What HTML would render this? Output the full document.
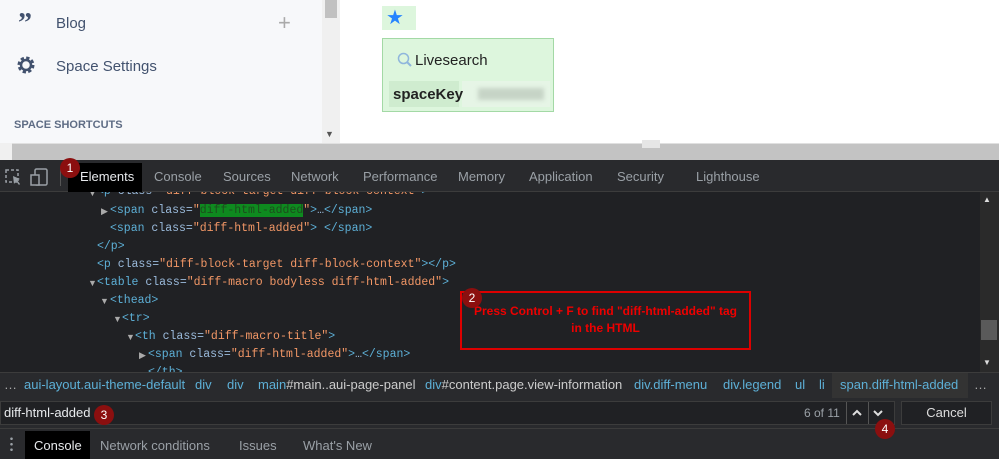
<!DOCTYPE html>
<html><head><style>
*{margin:0;padding:0;box-sizing:border-box}
body{width:999px;height:459px;overflow:hidden;position:relative;background:#fff;font-family:"Liberation Sans",sans-serif}
.abs{position:absolute}
.cl{position:absolute;font-family:"Liberation Mono",monospace;font-size:11.5px;white-space:pre;color:#9bbbdc;line-height:18px;height:18px}
.t{color:#5db0d7}.v{color:#f29766}
.tr{position:absolute;font-size:9px;color:#aaa;line-height:18px}
.tab{position:absolute;top:160px;height:32px;line-height:34px;font-size:13px;color:#9aa0a6}
.bc{position:absolute;top:372px;height:26px;line-height:26px;font-size:13px;color:#5db0d7}
.badge{position:absolute;width:20px;height:20px;border-radius:50%;background:#8b0f0f;color:#fff;font-size:12px;text-align:center;line-height:20px}
</style></head><body>
<div class="abs" style="left:0;top:0;width:322px;height:143px;background:#f7f8fa"></div>
<div class="abs" style="left:322px;top:0;width:18px;height:143px;background:#f0f0f0"></div>
<div class="abs" style="left:325px;top:0;width:12px;height:18px;background:#c1c1c1"></div>
<div class="abs" style="left:325px;top:129px;color:#555;font-size:9px">▼</div>
<div class="abs" style="left:18px;top:8px;font-size:28px;font-weight:bold;color:#42526e;font-family:'Liberation Serif',serif">”</div>
<div class="abs" style="left:56px;top:15px;font-size:15px;color:#42526e">Blog</div>
<div class="abs" style="left:278px;top:10px;font-size:22px;color:#aaa">+</div>
<svg class="abs" style="left:16px;top:55px" width="20" height="20" viewBox="0 0 20 20"><circle cx="10" cy="10" r="6.5" fill="none" stroke="#42526e" stroke-width="4" stroke-dasharray="3 2.1"/><circle cx="10" cy="10" r="5" fill="none" stroke="#42526e" stroke-width="2.5"/></svg>
<div class="abs" style="left:56px;top:58px;font-size:15px;color:#42526e">Space Settings</div>
<div class="abs" style="left:14px;top:119px;font-size:11px;font-weight:bold;color:#5e6c84">SPACE SHORTCUTS</div>
<div class="abs" style="left:382px;top:6px;width:34px;height:24px;background:#ddf6dd"></div>
<div class="abs" style="left:386px;top:5px;font-size:20px;color:#2684ff">★</div>
<div class="abs" style="left:382px;top:38px;width:172px;height:74px;background:#ddf6dd;border:1px solid #a3d9a5"></div>
<svg class="abs" style="left:397px;top:52px" width="16" height="16"><circle cx="6.5" cy="6.5" r="5" fill="none" stroke="#8fb6dc" stroke-width="1.5"/><line x1="10" y1="10" x2="14" y2="14" stroke="#8fb6dc" stroke-width="2"/></svg>
<div class="abs" style="left:415px;top:52px;font-size:15px;color:#222">Livesearch</div>
<div class="abs" style="left:389px;top:81px;width:70px;height:26px;background:#cfeccf"></div>
<div class="abs" style="left:462px;top:81px;width:88px;height:26px;background:#e6f5e6"></div>
<div class="abs" style="left:393px;top:86px;font-size:15px;font-weight:bold;color:#222">spaceKey</div>
<div class="abs" style="left:478px;top:88px;width:66px;height:12px;background:#c6d4c6;filter:blur(2px)"></div>
<div class="abs" style="left:0;top:143px;width:999px;height:17px;background:#c3c3c3;border-top:1px solid #e0e0e0"></div>
<div class="abs" style="left:0;top:143px;width:12px;height:17px;background:#f0f0f0"></div>
<div class="abs" style="left:642px;top:140px;width:18px;height:8px;background:#e6e6e6"></div>
<div class="abs" style="left:0;top:160px;width:999px;height:32px;background:#292a2d;border-bottom:1px solid #3c3c3c"></div>
<svg class="abs" style="left:5px;top:168px" width="44" height="18"><rect x="1" y="2" width="12" height="12" fill="none" stroke="#9aa0a6" stroke-width="1.5" stroke-dasharray="3 2"/><path d="M8 8l7 3-3 1 3 4-1 1-3-4-2 3z" fill="#9aa0a6"/><rect x="30" y="1" width="12" height="16" rx="1.5" fill="none" stroke="#9aa0a6" stroke-width="1.5"/><rect x="26" y="7" width="8" height="10" fill="#292a2d" stroke="#9aa0a6" stroke-width="1.5"/></svg>
<div class="abs" style="left:60px;top:168px;width:1px;height:18px;background:#555"></div>
<div class="abs" style="left:68px;top:163px;width:74px;height:29px;background:#000"></div>
<div class="tab" style="left:80px;color:#e8eaed">Elements</div>
<div class="tab" style="left:154px">Console</div>
<div class="tab" style="left:223px">Sources</div>
<div class="tab" style="left:291px">Network</div>
<div class="tab" style="left:363px">Performance</div>
<div class="tab" style="left:458px">Memory</div>
<div class="tab" style="left:529px">Application</div>
<div class="tab" style="left:617px">Security</div>
<div class="tab" style="left:696px">Lighthouse</div>
<div class="badge" style="left:60px;top:158px">1</div>
<div class="abs" style="left:0;top:192px;width:999px;height:180px;background:#202124;overflow:hidden">
<div class="tr" style="left:88px;top:-8px">▼</div><div class="cl" style="left:97px;top:-9px"><span class="t">&lt;p</span> class=<span class="v">"diff-block-target diff-block-context"</span><span class="t">&gt;</span></div>
<div class="tr" style="left:101px;top:10px">▶</div><div class="cl" style="left:110px;top:10px"><span class="t">&lt;span</span> class=<span class="v">"<span style="background:#0e8a1f;color:#1d4d1d">diff-html-added</span>"</span><span class="t">&gt;</span>…<span class="t">&lt;/span&gt;</span></div>
<div class="cl" style="left:110px;top:28px"><span class="t">&lt;span</span> class=<span class="v">"diff-html-added"</span><span class="t">&gt; &lt;/span&gt;</span></div>
<div class="cl" style="left:97px;top:46px"><span class="t">&lt;/p&gt;</span></div>
<div class="cl" style="left:97px;top:64px"><span class="t">&lt;p</span> class=<span class="v">"diff-block-target diff-block-context"</span><span class="t">&gt;&lt;/p&gt;</span></div>
<div class="tr" style="left:88px;top:82px">▼</div><div class="cl" style="left:97px;top:82px"><span class="t">&lt;table</span> class=<span class="v">"diff-macro bodyless diff-html-added"</span><span class="t">&gt;</span></div>
<div class="tr" style="left:100px;top:100px">▼</div><div class="cl" style="left:110px;top:100px"><span class="t">&lt;thead&gt;</span></div>
<div class="tr" style="left:113px;top:118px">▼</div><div class="cl" style="left:122px;top:118px"><span class="t">&lt;tr&gt;</span></div>
<div class="tr" style="left:126px;top:136px">▼</div><div class="cl" style="left:135px;top:136px"><span class="t">&lt;th</span> class=<span class="v">"diff-macro-title"</span><span class="t">&gt;</span></div>
<div class="tr" style="left:139px;top:154px">▶</div><div class="cl" style="left:148px;top:154px"><span class="t">&lt;span</span> class=<span class="v">"diff-html-added"</span><span class="t">&gt;</span>…<span class="t">&lt;/span&gt;</span></div>
<div class="cl" style="left:148px;top:172px"><span class="t">&lt;/th&gt;</span></div>
</div>
<div class="abs" style="left:980px;top:192px;width:19px;height:180px;background:#2a2a2a"></div>
<div class="abs" style="left:981px;top:320px;width:16px;height:20px;background:#5a5a5a"></div>
<div class="abs" style="left:983px;top:195px;color:#ddd;font-size:8px">▲</div>
<div class="abs" style="left:983px;top:358px;color:#ddd;font-size:8px">▼</div>
<div class="abs" style="left:460px;top:291px;width:291px;height:59px;border:2px solid #d00;background:#202124"></div>
<div class="abs" style="left:462px;top:303px;width:287px;text-align:center;color:#e00;font-size:12px;font-weight:bold;line-height:17px">Press Control + F to find "diff-html-added" tag<br>in the HTML</div>
<div class="badge" style="left:462px;top:288px">2</div>
<div class="abs" style="left:0;top:372px;width:999px;height:26px;background:#292a2d;border-top:1px solid #3c3c3c"></div>
<div class="abs" style="left:832px;top:373px;width:136px;height:25px;background:#333"></div>
<div class="bc" style="left:4px;color:#aaa">…</div>
<div class="bc" style="left:24px">aui-layout.aui-theme-default</div>
<div class="bc" style="left:195px">div</div>
<div class="bc" style="left:227px">div</div>
<div class="bc" style="left:258px">main<span style="color:#ccc">#main..aui-page-panel</span></div>
<div class="bc" style="left:425px">div<span style="color:#ccc">#content.page.view-information</span></div>
<div class="bc" style="left:634px">div.diff-menu</div>
<div class="bc" style="left:723px">div.legend</div>
<div class="bc" style="left:795px">ul</div>
<div class="bc" style="left:819px">li</div>
<div class="bc" style="left:840px">span.diff-html-added</div>
<div class="bc" style="left:974px;color:#aaa">…</div>
<div class="abs" style="left:0;top:398px;width:999px;height:30px;background:#292a2d"></div>
<div class="abs" style="left:0;top:401px;width:895px;height:24px;background:#202124;border:1px solid #3c3c3c"></div>
<div class="abs" style="left:4px;top:405px;font-size:13px;color:#e8eaed">diff-html-added</div>
<div class="abs" style="left:804px;top:406px;font-size:12px;color:#9aa0a6">6 of 11</div>
<div class="abs" style="left:846px;top:402px;width:1px;height:22px;background:#555"></div>
<div class="abs" style="left:868px;top:402px;width:1px;height:22px;background:#555"></div>
<svg class="abs" style="left:851px;top:407px" width="12" height="12"><path d="M2 8l4-4 4 4" fill="none" stroke="#ddd" stroke-width="2"/></svg>
<svg class="abs" style="left:872px;top:407px" width="12" height="12"><path d="M2 4l4 4 4-4" fill="none" stroke="#ddd" stroke-width="2"/></svg>
<div class="abs" style="left:901px;top:401px;width:91px;height:24px;background:#202124;border:1px solid #3c3c3c;color:#ddd;font-size:13px;text-align:center;line-height:22px">Cancel</div>
<div class="badge" style="left:94px;top:405px">3</div>
<div class="abs" style="left:0;top:428px;width:999px;height:31px;background:#292a2d;border-top:1px solid #3c3c3c"></div>
<div class="abs" style="left:10px;top:436px;width:3px;height:16px;background:radial-gradient(circle,#9aa0a6 1.2px,transparent 1.4px) 0 0/3px 5.5px"></div>
<div class="abs" style="left:25px;top:431px;width:65px;height:28px;background:#000"></div>
<div class="tab" style="top:429px;left:34px;color:#e8eaed">Console</div>
<div class="tab" style="top:429px;left:100px">Network conditions</div>
<div class="tab" style="top:429px;left:239px">Issues</div>
<div class="tab" style="top:429px;left:303px">What's New</div>
<div class="badge" style="left:875px;top:419px">4</div>
</body></html>
